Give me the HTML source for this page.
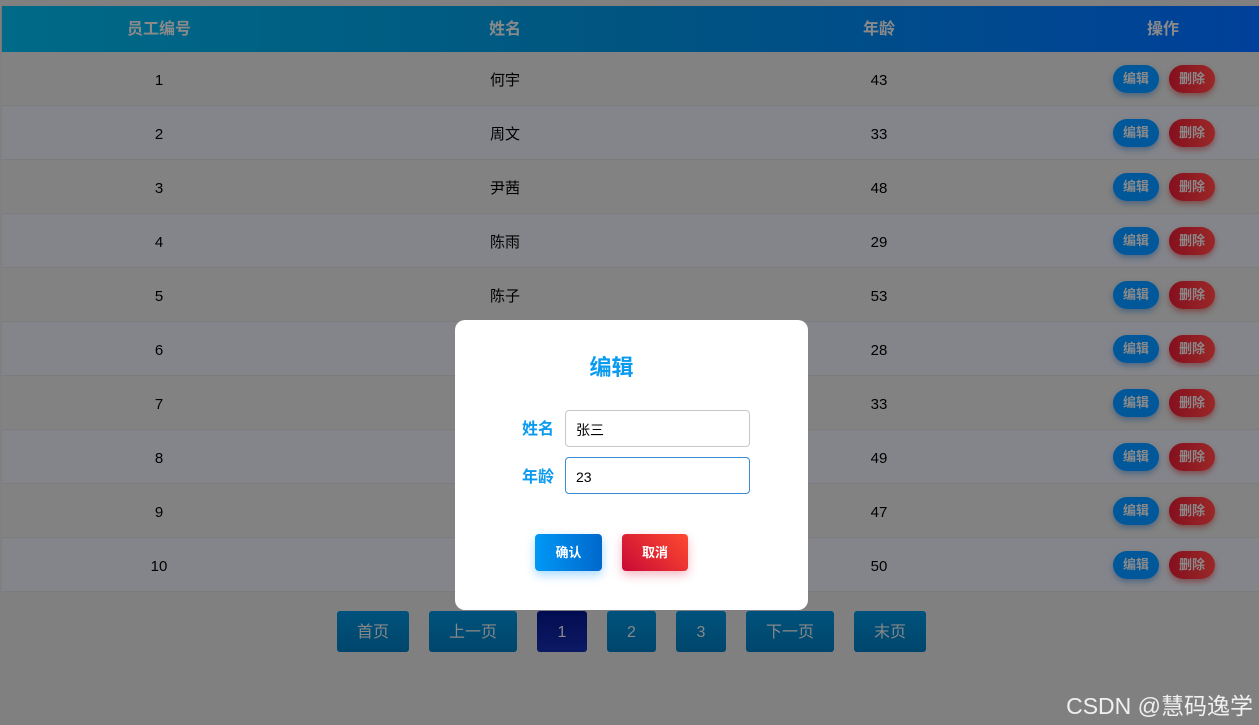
<!DOCTYPE html>
<html><head><meta charset="utf-8"><style>
*{margin:0;padding:0;box-sizing:border-box}
body{width:1259px;height:725px;background:#808080;font-family:"Liberation Sans","Noto Sans CJK SC",sans-serif;position:relative;overflow:hidden}
.hdr{position:absolute;left:2px;top:6px;width:1257px;height:46px;background:linear-gradient(90deg,#006a88,#005580 50%,#00409a);box-shadow:0 1px 2px rgba(0,0,0,.2)}
.hdr span,.row span{position:absolute;top:0;transform:translateX(-50%);white-space:nowrap}
.hdr span{line-height:46px;color:#8a8a8a;font-weight:bold;font-size:16px;top:1px}
.row{position:absolute;left:2px;width:1257px;height:54px;border-bottom:1px solid #7c7c7c}
.row span{line-height:54px;font-size:15px;color:#000;top:2px}
.row:nth-child(odd){background:#828282}
.row:nth-child(even){background:#84858a}
.b{position:absolute;top:13px;height:28px;width:46px;border-radius:14px;color:#8a8a8a;font-size:13px;font-weight:bold;line-height:28px;text-align:center}
.e{left:1111px;background:#00579a;box-shadow:0 3px 6px rgba(0,60,120,.4)}
.d{left:1167px;background:linear-gradient(90deg,#84101e,#9a2828);box-shadow:0 3px 6px rgba(120,0,0,.4)}
.pg{position:absolute;top:611px;height:41px;border-radius:3px;background:linear-gradient(#00527c,#00466c);color:#888;font-size:16px;line-height:43px;text-align:center}
.modal{position:absolute;left:455px;top:320px;width:353px;height:290px;background:#fff;border-radius:10px}
.lbl{position:absolute;left:67px;color:#0a9af0;font-weight:bold;font-size:16px}
.in{position:absolute;left:110px;width:185px;height:37px;border:1px solid #c8c8c8;border-radius:4px;padding-left:10px;font-size:14px;line-height:38px}
.mb{position:absolute;top:214px;height:37px;border-radius:4px;color:#fff;font-weight:bold;font-size:13px;line-height:37px;text-align:center}
</style></head><body>
<div class="hdr"><span style="left:157px">员工编号</span><span style="left:503px">姓名</span><span style="left:877px">年龄</span><span style="left:1161px">操作</span></div>
<div style="position:absolute;left:0;top:52px;width:1259px">
<div class="row" style="top:0"><span style="left:157px">1</span><span style="left:503px">何宇</span><span style="left:877px">43</span><div class="b e">编辑</div><div class="b d">删除</div></div>
<div class="row" style="top:54px"><span style="left:157px">2</span><span style="left:503px">周文</span><span style="left:877px">33</span><div class="b e">编辑</div><div class="b d">删除</div></div>
<div class="row" style="top:108px"><span style="left:157px">3</span><span style="left:503px">尹茜</span><span style="left:877px">48</span><div class="b e">编辑</div><div class="b d">删除</div></div>
<div class="row" style="top:162px"><span style="left:157px">4</span><span style="left:503px">陈雨</span><span style="left:877px">29</span><div class="b e">编辑</div><div class="b d">删除</div></div>
<div class="row" style="top:216px"><span style="left:157px">5</span><span style="left:503px">陈子</span><span style="left:877px">53</span><div class="b e">编辑</div><div class="b d">删除</div></div>
<div class="row" style="top:270px"><span style="left:157px">6</span><span style="left:877px">28</span><div class="b e">编辑</div><div class="b d">删除</div></div>
<div class="row" style="top:324px"><span style="left:157px">7</span><span style="left:877px">33</span><div class="b e">编辑</div><div class="b d">删除</div></div>
<div class="row" style="top:378px"><span style="left:157px">8</span><span style="left:877px">49</span><div class="b e">编辑</div><div class="b d">删除</div></div>
<div class="row" style="top:432px"><span style="left:157px">9</span><span style="left:877px">47</span><div class="b e">编辑</div><div class="b d">删除</div></div>
<div class="row" style="top:486px"><span style="left:157px">10</span><span style="left:877px">50</span><div class="b e">编辑</div><div class="b d">删除</div></div>
</div>
<div class="pg" style="left:337px;width:72px">首页</div>
<div class="pg" style="left:429px;width:88px">上一页</div>
<div class="pg" style="left:537px;width:50px;background:linear-gradient(#020c50,#0c1a64)">1</div>
<div class="pg" style="left:607px;width:49px">2</div>
<div class="pg" style="left:676px;width:50px">3</div>
<div class="pg" style="left:746px;width:88px">下一页</div>
<div class="pg" style="left:854px;width:72px">末页</div>
<div class="modal">
<div style="position:absolute;left:0;width:313px;top:30px;text-align:center;color:#0a9af0;font-weight:bold;font-size:22px">编辑</div>
<div class="lbl" style="top:95px">姓名</div><div class="in" style="top:90px">张三</div>
<div class="lbl" style="top:143px">年龄</div><div class="in" style="top:137px;border-color:#3a8ad0">23</div>
<div class="mb" style="left:80px;width:67px;background:linear-gradient(90deg,#0098f5,#0068cc);box-shadow:0 4px 10px rgba(0,150,255,.35)">确认</div>
<div class="mb" style="left:167px;width:66px;background:linear-gradient(45deg,#c80a35,#ff4a30);box-shadow:0 4px 10px rgba(220,20,60,.3)">取消</div>
</div>
<div style="position:absolute;right:6px;top:687px;color:#f0f0f0;font-size:23px;white-space:nowrap">CSDN @慧码逸学</div>
</body></html>
